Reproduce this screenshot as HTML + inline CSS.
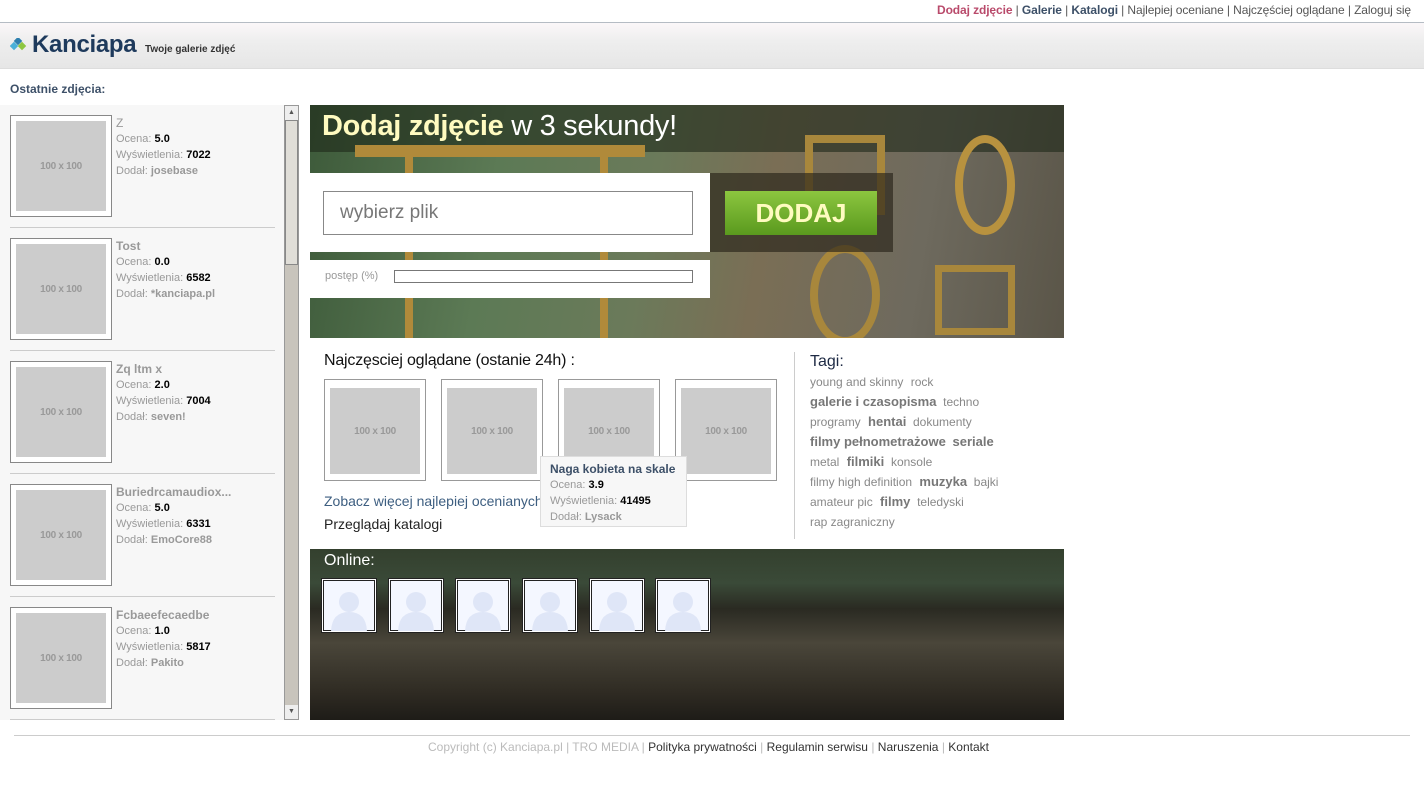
<!DOCTYPE html>
<html><head><meta charset="utf-8"><style>
*{margin:0;padding:0;box-sizing:border-box}
body{width:1424px;height:786px;position:relative;background:#fff;font-family:"Liberation Sans",Arial,sans-serif;overflow:hidden}
.a{position:absolute}
.top{right:13px;top:3px;font-size:12px;color:#555;letter-spacing:-.1px}
.top b{font-weight:bold}
.hdr{left:0;top:22px;width:1424px;height:47px;border-top:1px solid #b5bcc4;border-bottom:1px solid #ddd;background:linear-gradient(#fbf7f9,#eeeeee 40%,#e6e6e6)}
.item{left:10px;width:265px;height:113px;border-bottom:1px solid #ccc}
.fr{position:absolute;left:0;top:0;width:102px;height:102px;border:1px solid #888;padding:5px;background:#fff}
.ph{width:90px;height:90px;background:#ccc;color:#999;font-size:10px;display:flex;align-items:center;justify-content:center;font-family:"Liberation Sans",sans-serif;font-weight:bold;letter-spacing:-.3px}
.inf{position:absolute;left:106px;top:0;font-size:11px;color:#999;line-height:16px}
.inf .t{font-size:12px;font-weight:bold;color:#999}
.inf b{color:#000}
.inf .u{color:#999}
.thumb{top:379px;width:102px;height:102px;border:1px solid #999;padding:8px 5px;background:#fff}
.thumb .ph{height:86px}
.tags{left:810px;top:372px;width:240px;font-size:12px;color:#888;line-height:20px}
.tags span{margin-right:4px}
.tags b{font-size:13px;color:#777}
.av{top:579px;width:54px;height:53px;border:1px solid #fff;box-shadow:0 0 0 1px #222,inset 0 0 0 1px #222;background:#f4f7ff;overflow:hidden}
</style></head><body>
<div class="a top"><b style="color:#b94a6b">Dodaj zdjęcie</b> | <b style="color:#3d5068">Galerie</b> | <b style="color:#3d5068">Katalogi</b> | Najlepiej oceniane | Najczęściej oglądane | Zaloguj się</div>
<div class="a hdr">
<svg class="a" style="left:10px;top:15px" width="18" height="16"><rect x="5" y="0" width="6" height="6" transform="rotate(45 8 3)" fill="#2e7fae"/><rect x="1" y="5" width="6" height="6" transform="rotate(45 4 8)" fill="#4ab0d8"/><rect x="9" y="5" width="6" height="6" transform="rotate(45 12 8)" fill="#8dc641"/></svg>
<div class="a" style="left:32px;top:8px;font-size:24px;font-weight:bold;color:#1e3a5c;font-family:'Liberation Sans',sans-serif;letter-spacing:-.3px">Kanciapa</div>
<div class="a" style="left:145px;top:21px;font-size:10px;font-weight:bold;color:#333">Twoje galerie zdjęć</div>
</div>
<div class="a" style="left:10px;top:82px;font-size:12px;font-weight:bold;color:#3d5068">Ostatnie zdjęcia:</div>
<div class="a" style="left:0;top:105px;width:284px;height:615px;background:#f7f7f7;overflow:hidden">
<div class="a item" style="top:10px"><div class="fr"><div class="ph">100 x 100</div></div><div class="inf"><div class="t" style="font-weight:normal">Z</div>Ocena: <b>5.0</b><br>Wyświetlenia: <b>7022</b><br>Dodał: <b class="u">josebase</b></div></div>
<div class="a item" style="top:133px"><div class="fr"><div class="ph">100 x 100</div></div><div class="inf"><div class="t">Tost</div>Ocena: <b>0.0</b><br>Wyświetlenia: <b>6582</b><br>Dodał: <b class="u">*kanciapa.pl</b></div></div>
<div class="a item" style="top:256px"><div class="fr"><div class="ph">100 x 100</div></div><div class="inf"><div class="t">Zq ltm x</div>Ocena: <b>2.0</b><br>Wyświetlenia: <b>7004</b><br>Dodał: <b class="u">seven!</b></div></div>
<div class="a item" style="top:379px"><div class="fr"><div class="ph">100 x 100</div></div><div class="inf"><div class="t">Buriedrcamaudiox...</div>Ocena: <b>5.0</b><br>Wyświetlenia: <b>6331</b><br>Dodał: <b class="u">EmoCore88</b></div></div>
<div class="a item" style="top:502px"><div class="fr"><div class="ph">100 x 100</div></div><div class="inf"><div class="t">Fcbaeefecaedbe</div>Ocena: <b>1.0</b><br>Wyświetlenia: <b>5817</b><br>Dodał: <b class="u">Pakito</b></div></div>
</div>
<div class="a" style="left:284px;top:105px;width:15px;height:615px;background:#c8c4bc;border:1px solid #999">
<div class="a" style="left:0;top:0;width:13px;height:14px;background:#eee;font-size:7px;text-align:center;color:#555;line-height:14px">▲</div>
<div class="a" style="left:0;top:14px;width:13px;height:145px;background:#e0ded8;border:1px solid #888"></div>
<div class="a" style="left:0;bottom:0;width:13px;height:14px;background:#eee;font-size:7px;text-align:center;color:#555;line-height:14px">▼</div>
</div>
<div class="a" style="left:310px;top:105px;width:754px;height:233px;background:linear-gradient(100deg,#3d5a3a 0%,#5c7a55 25%,#6b7a5a 45%,#7a6e55 60%,#6e6a5e 80%,#5a5548 100%);overflow:hidden">
<div class="a" style="left:0;top:0;width:754px;height:47px;background:rgba(30,40,25,.6)"></div>
<div class="a" style="left:95px;top:47px;width:8px;height:186px;background:#b08a3a"></div>
<div class="a" style="left:290px;top:47px;width:8px;height:186px;background:#b08a3a"></div>
<div class="a" style="left:45px;top:40px;width:290px;height:12px;background:#b08a3a"></div>
<div class="a" style="left:495px;top:30px;width:80px;height:80px;border:8px solid #a8873c"></div>
<div class="a" style="left:645px;top:30px;width:60px;height:100px;border:8px solid #b8923f;border-radius:50%"></div>
<div class="a" style="left:500px;top:140px;width:70px;height:100px;border:8px solid #a8873c;border-radius:50%"></div>
<div class="a" style="left:625px;top:160px;width:80px;height:70px;border:7px solid #a8873c"></div>
<div class="a" style="left:12px;top:5px;font-size:29px;color:#fff;font-family:'Liberation Sans',sans-serif;letter-spacing:-.3px"><span style="color:#fffbc0;font-weight:bold">Dodaj zdjęcie</span> w 3 sekundy!</div>
<div class="a" style="left:0;top:68px;width:400px;height:79px;background:#fff"></div>
<div class="a" style="left:400px;top:68px;width:183px;height:79px;background:rgba(40,35,25,.65)"></div>
<div class="a" style="left:13px;top:86px;width:370px;height:44px;border:1px solid #888;background:#fff;font-size:19px;color:#777;padding:10px 16px;font-family:'Liberation Sans',sans-serif">wybierz plik</div>
<div class="a" style="left:415px;top:86px;width:152px;height:44px;background:linear-gradient(#8cc63f,#5a9a1e);color:#fffbc0;font-size:26px;font-weight:bold;text-align:center;line-height:44px;font-family:'Liberation Sans',sans-serif">DODAJ</div>
<div class="a" style="left:0;top:155px;width:400px;height:38px;background:#fff"></div>
<div class="a" style="left:15px;top:165px;font-size:11px;color:#999">postęp (%)</div>
<div class="a" style="left:84px;top:165px;width:299px;height:13px;border:1px solid #777"></div>
</div>
<div class="a" style="left:324px;top:352px;font-size:16px;color:#111;letter-spacing:-.2px">Najczęsciej oglądane (ostanie 24h) :</div>
<div class="a thumb" style="left:324px"><div class="ph">100 x 100</div></div>
<div class="a thumb" style="left:441px"><div class="ph">100 x 100</div></div>
<div class="a thumb" style="left:558px"><div class="ph">100 x 100</div></div>
<div class="a thumb" style="left:675px"><div class="ph">100 x 100</div></div>
<div class="a" style="left:324px;top:493px;font-size:14px;color:#3d5e80">Zobacz więcej najlepiej ocenianych</div>
<div class="a" style="left:324px;top:516px;font-size:14px;color:#222">Przeglądaj katalogi</div>
<div class="a" style="left:540px;top:456px;width:147px;height:71px;background:#f7f7f7;border:1px solid #ddd;padding:4px 9px;font-size:11px;color:#999;line-height:16px"><div style="font-size:12px;font-weight:bold;color:#3d5068">Naga kobieta na skale</div>Ocena: <b style="color:#000">3.9</b><br>Wyświetlenia: <b style="color:#000">41495</b><br>Dodał: <b>Lysack</b></div>
<div class="a" style="left:794px;top:352px;width:1px;height:187px;background:#ccc"></div>
<div class="a" style="left:810px;top:353px;font-size:16px;color:#1e2a44">Tagi:</div>
<div class="a tags"><span>young and skinny</span> <span>rock</span><br><b>galerie i czasopisma</b> &nbsp;<span>techno</span><br><span>programy</span> <b>hentai</b> &nbsp;<span>dokumenty</span><br><b>filmy pełnometrażowe</b> &nbsp;<b>seriale</b><br><span>metal</span> <b>filmiki</b> &nbsp;<span>konsole</span><br><span>filmy high definition</span> <b>muzyka</b> &nbsp;<span>bajki</span><br><span>amateur pic</span> <b>filmy</b> &nbsp;<span>teledyski</span><br><span>rap zagraniczny</span></div>
<div class="a" style="left:310px;top:549px;width:754px;height:171px;background:linear-gradient(#34402e 0%,#3a4a38 20%,#2a2a22 35%,#4a463a 55%,#2e2a22 85%,#1e1c18 100%)"></div>
<div class="a" style="left:324px;top:552px;font-size:16px;color:#fff">Online:</div>
<svg width="0" height="0" style="position:absolute"><defs><g id="p"><circle cx="26" cy="22" r="10" fill="#dfe6f7"/><path d="M8 53 Q8 32 26 32 Q44 32 44 53Z" fill="#dfe6f7"/></g></defs></svg>
<div class="a av" style="left:322px"><svg width="52" height="51"><use href="#p"/></svg></div>
<div class="a av" style="left:389px"><svg width="52" height="51"><use href="#p"/></svg></div>
<div class="a av" style="left:456px"><svg width="52" height="51"><use href="#p"/></svg></div>
<div class="a av" style="left:523px"><svg width="52" height="51"><use href="#p"/></svg></div>
<div class="a av" style="left:590px"><svg width="52" height="51"><use href="#p"/></svg></div>
<div class="a av" style="left:656px"><svg width="52" height="51"><use href="#p"/></svg></div>
<div class="a" style="left:14px;top:735px;width:1396px;height:1px;background:#ccc"></div>
<div class="a" style="left:428px;top:740px;font-size:12px;color:#bbb">Copyright (c) Kanciapa.pl | TRO MEDIA | <span style="color:#333">Polityka prywatności</span> | <span style="color:#333">Regulamin serwisu</span> | <span style="color:#333">Naruszenia</span> | <span style="color:#333">Kontakt</span></div>
</body></html>
